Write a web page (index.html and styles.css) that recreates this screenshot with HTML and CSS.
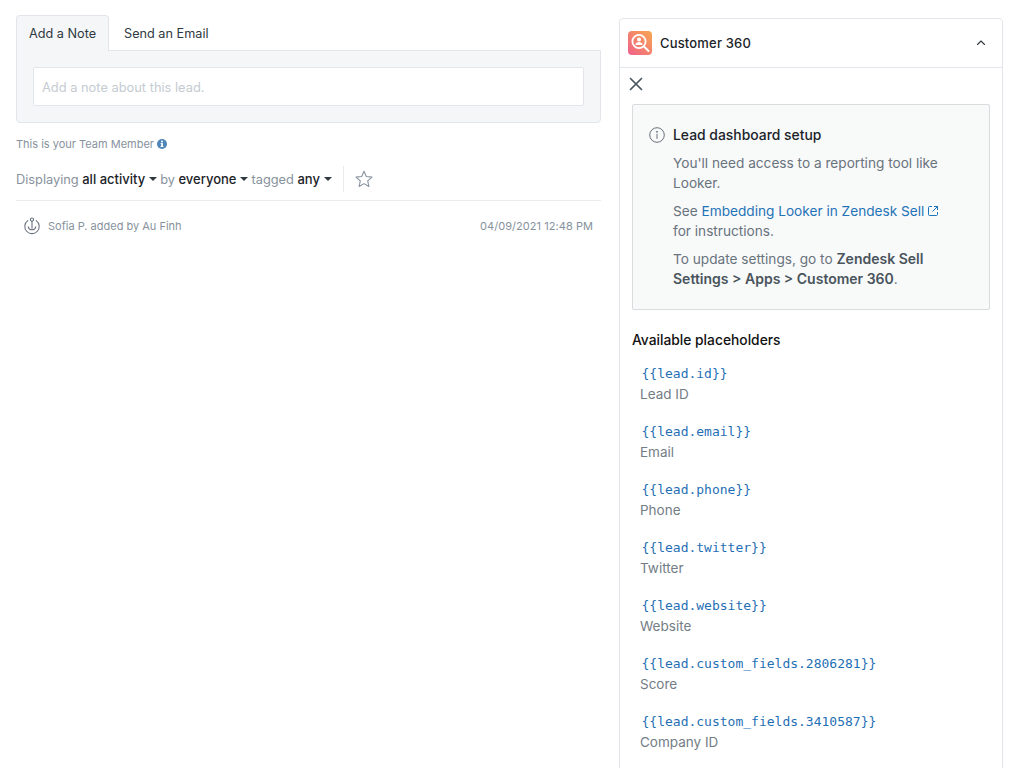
FILE: index.html
```html
<!DOCTYPE html>
<html>

<head>
	<meta charset="UTF-8">
	<title>Lead</title>
	<link rel="stylesheet" href="styles.css">
</head>

<body>
	<div class="page">
		<!--left column-->
		<div class="main">
			<div class="tabs">
				<a class="tab active">Add a Note</a>
				<a class="tab">Send an Email</a>
			</div>
			<div class="composer">
				<div class="note-input">Add a note about this lead.</div>
			</div>
			<p class="team">This is your Team Member
				<svg class="team-icon" width="10" height="10" viewBox="0 0 10 10">
					<circle cx="5" cy="5" r="5" fill="#4f86b8" />
					<rect x="4.2" y="4.2" width="1.7" height="3.6" fill="#fff" />
					<rect x="3.5" y="7" width="3" height="0.9" fill="#fff" />
					<rect x="3.5" y="4.1" width="2" height="0.8" fill="#fff" />
					<circle cx="5" cy="2.6" r="1" fill="#fff" />
				</svg>
			</p>
			<div class="filters">
				<span>Displaying</span>
				<b>all activity</b><i class="caret"></i>
				<span>by</span>
				<b>everyone</b><i class="caret"></i>
				<span>tagged</span>
				<b>any</b><i class="caret"></i>
				<div class="filter-sep">
					<svg width="18" height="18" viewBox="0 0 18 18">
						<path d="M9 1.3l2.3 5.2 5.7.6-4.3 3.8 1.2 5.6L9 13.6l-4.9 2.9 1.2-5.6L1 7.1l5.7-.6z" fill="none" stroke="#87929d" stroke-width="1.1" stroke-linejoin="round" />
					</svg>
				</div>
			</div>
			<div class="activity">
				<svg width="18" height="18" viewBox="0 0 18 18" fill="none" stroke="#68737d" stroke-width="1.1" stroke-linecap="round">
					<circle cx="9" cy="2.6" r="1.6" />
					<path d="M9 4.4v6.800" />
					<path d="M4.800 3.600A7.200 7.200 0 1 0 13.200 3.600" />
					<path d="M5.200 9.800a3.900 3.900 0 0 0 7.600 0" />
				</svg>
				<span class="activity-text">Sofia P. added by Au Finh</span>
				<span class="activity-date">04/09/2021 12:48 PM</span>
			</div>
		</div>

		<!--right panel-->
		<div class="panel">
			<div class="panel-head">
				<svg class="logo" width="24" height="24" viewBox="0 0 24 24">
					<defs>
						<linearGradient id="logoGrad" x1="0" y1="1" x2="1" y2="0">
							<stop offset="0" stop-color="#f0608a" />
							<stop offset="1" stop-color="#f8a650" />
						</linearGradient>
					</defs>
					<rect width="24" height="24" rx="4" fill="url(#logoGrad)" />
					<circle cx="11" cy="10.5" r="6.6" fill="none" stroke="#fff" stroke-width="1.8" />
					<circle cx="11" cy="8.6" r="2" fill="#fff" />
					<path d="M7.4 14c.3-2 1.8-2.9 3.6-2.9s3.300.9 3.600 2.900z" fill="#fff" />
					<path d="M16 15.500l4.500 4.500" stroke="#fff" stroke-width="2" stroke-linecap="round" />
				</svg>
				<span class="panel-title">Customer 360</span>
				<svg class="chevron" width="12" height="12" viewBox="0 0 12 12">
					<path d="M2.500 7.500L6 4l3.500 3.500" fill="none" stroke="#2f3941" stroke-width="1.100" stroke-linecap="round" stroke-linejoin="round" />
				</svg>
			</div>
			<div class="panel-close">
				<svg width="14" height="14" viewBox="0 0 14 14">
					<path d="M1.500 1.500l11 11M12.500 1.500l-11 11" stroke="#49545c" stroke-width="1.700" stroke-linecap="round" />
				</svg>
			</div>
			<div class="panel-body">
				<div class="notice">
					<div class="notice-title">
						<svg width="16" height="16" viewBox="0 0 16 16" fill="none" stroke="#68737d">
							<circle cx="8" cy="8" r="7.300" />
							<path d="M8 7.200v4.300" stroke-linecap="round" />
							<circle cx="8" cy="4.800" r="0.500" fill="#68737d" />
						</svg>
						<span>Lead dashboard setup</span>
					</div>
					<p>You'll need access to a reporting tool like<br>Looker.</p>
					<p>See <a class="link">Embedding Looker in Zendesk Sell
							<svg width="10" height="10" viewBox="0 0 10 10" fill="none" stroke="#1f73b7">
								<path d="M4 .5H1.500a1 1 0 0 0-1 1v7a1 1 0 0 0 1 1h7a1 1 0 0 0 1-1V6" />
								<path d="M6 .5h3.500V4M9.500 .5L4.500 5.500" />
							</svg></a><br>for instructions.</p>
					<p>To update settings, go to <strong>Zendesk Sell</strong><br><strong>Settings &gt; Apps &gt; Customer 360</strong>.</p>
				</div>
				<h4 class="ph-title">Available placeholders</h4>
				<ul class="ph-list">
					<li><code>{{lead.id}}</code><span>Lead ID</span></li>
					<li><code>{{lead.email}}</code><span>Email</span></li>
					<li><code>{{lead.phone}}</code><span>Phone</span></li>
					<li><code>{{lead.twitter}}</code><span>Twitter</span></li>
					<li><code>{{lead.website}}</code><span>Website</span></li>
					<li><code>{{lead.custom_fields.2806281}}</code><span>Score</span></li>
					<li><code>{{lead.custom_fields.3410587}}</code><span>Company ID</span></li>
				</ul>
			</div>
		</div>
	</div>
</body>

</html>
```
FILE: styles.css
```css
* {
	margin: 0;
	padding: 0;
	box-sizing: border-box;
}

html,
body {
	height: 100%;
	overflow: hidden;
}

body {
	font-family: Inter, "Liberation Sans", sans-serif;
	font-size: 13px;
	color: #2f3941;
	background: #fff;
}

.page {
	display: flex;
	align-items: flex-start;
	gap: 18px;
	padding: 15px 21px 0 16px;
}

.main {
	width: 585px;
	flex: none;
}

/* tabs */
.tabs {
	display: flex;
	height: 36px;
}

.tab {
	padding: 0 12px;
	line-height: 35px;
	font-size: 12.7px;
	white-space: nowrap;
	color: #2f3941;
	border: 1px solid transparent;
	border-bottom: 0;
	border-radius: 4px 4px 0 0;
}

.tab.active {
	width: 93px;
	background: #f5f6f7;
	border-color: #e2e6ea;
	z-index: 1;
}

.tab + .tab {
	margin-left: 2px;
}

.composer {
	margin-top: -1px;
	padding: 16px;
	height: 73px;
	background: #f5f6f7;
	border: 1px solid #e2e6ea;
	border-radius: 0 0 4px 4px;
}

.note-input {
	height: 39px;
	line-height: 37px;
	padding: 1px 8px 0;
	background: #fff;
	border: 1px solid #e2e6ea;
	border-radius: 2px;
	color: #c5cbd1;
	font-size: 12.850px;
}

.team {
	margin-top: 14px;
	line-height: 14px;
	font-size: 11px;
	color: #87929d;
}

.team-icon {
	vertical-align: -1px;
}

/* filter row */
.filters {
	display: flex;
	align-items: center;
	height: 26px;
	margin-top: 15px;
	font-size: 12.800px;
	color: #87929d;
}

.filters b {
	font-size: 13px;
	font-weight: 500;
	color: #1b2329;
	margin-left: 3.500px;
}

.caret {
	width: 0;
	height: 0;
	margin: 0 3px 0 4px;
	border-left: 4px solid transparent;
	border-right: 4px solid transparent;
	border-top: 4px solid #2f3941;
}

.filter-sep {
	display: flex;
	align-items: center;
	height: 26px;
	margin-left: 8px;
	padding-left: 11px;
	border-left: 1px solid #e9ebed;
}

/* activity */
.activity {
	display: flex;
	align-items: center;
	height: 50px;
	margin-top: 8px;
	padding: 0 8px 0 7px;
	border-top: 1px solid #e9ebed;
	font-size: 11px;
	color: #87929d;
}

.activity-text {
	margin-left: 7px;
}

.activity-date {
	margin-left: auto;
	letter-spacing: .05px;
}

/* right panel */
.panel {
	width: 384px;
	height: 800px;
	flex: none;
	margin-top: 3px;
	border: 1px solid #e2e6ea;
	border-radius: 4px;
}

.panel-head {
	display: flex;
	align-items: center;
	height: 49px;
	padding: 0 15px 0 8px;
	border-bottom: 1px solid #e2e6ea;
}

.panel-title {
	margin-left: 8px;
	font-size: 13px;
	font-weight: 500;
	letter-spacing: .17px;
	color: #1b2329;
}

.chevron {
	margin-left: auto;
}

.panel-close {
	display: flex;
	align-items: center;
	height: 32px;
	padding-left: 9px;
}

.panel-body {
	padding: 4px 12px 0;
}

.notice {
	height: 206px;
	padding: 20px 16px 0 40px;
	background: #f8f9f9;
	border: 1px solid #d8dcde;
	border-radius: 2px;
	line-height: 20px;
	color: #68737d;
}

.notice p {
	margin-top: 8px;
	font-size: 13.650px;
}

.notice-title {
	display: flex;
	align-items: center;
	gap: 8px;
	margin-left: -24px;
	font-size: 13.900px;
	font-weight: 500;
	color: #1b2329;
}

.notice strong {
	font-size: 14px;
	font-weight: 600;
	color: #49545c;
}

.link {
	color: #1f73b7;
}

.ph-title {
	margin-top: 20px;
	font-size: 13.800px;
	line-height: 20px;
	font-weight: 500;
	color: #111;
}

.ph-list {
	list-style: none;
	margin-top: 14px;
}

.ph-list li {
	height: 58px;
	padding-left: 8px;
}

.ph-list code {
	display: block;
	padding-left: 1.500px;
	font-family: "DejaVu Sans Mono", monospace;
	font-size: 13px;
	line-height: 20px;
	color: #1f6fb5;
}

.ph-list span {
	display: block;
	line-height: 20px;
	font-size: 13.500px;
	color: #737d86;
}
```
